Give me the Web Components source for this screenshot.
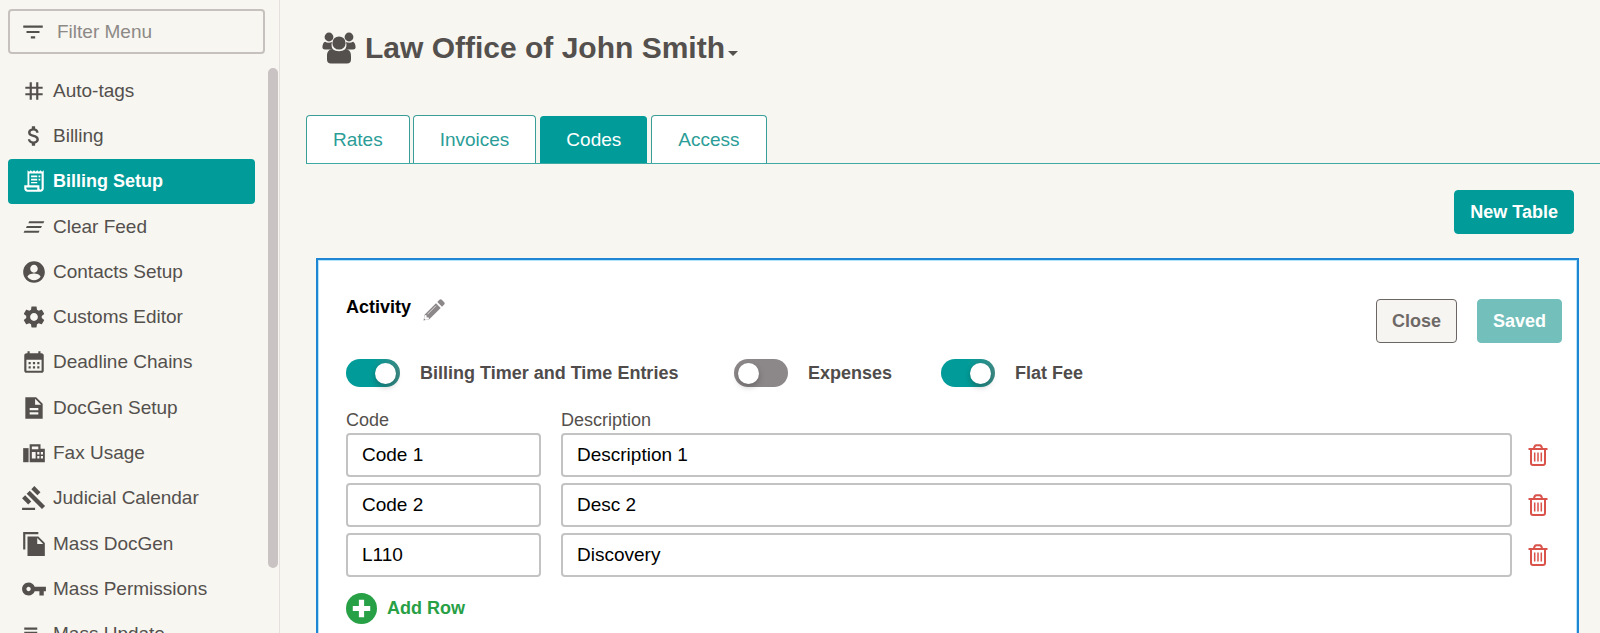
<!DOCTYPE html>
<html lang="en">
<head>
<meta charset="utf-8">
<title>Billing Setup</title>
<style>
  body { margin: 0; background: #f7f6f1; color: #54504d; font-family: "Liberation Sans", Arial, sans-serif; }
</style>
</head>
<body>
<app-shell>
  <side-menu slot="side"></side-menu>
  <office-header></office-header>
  <tab-bar></tab-bar>
  <codes-toolbar></codes-toolbar>
  <code-table-card name="Activity"></code-table-card>
</app-shell>

<script>
const ICONS = {
  filter: '<path d="M10 18h4v-2h-4v2zM3 6v2h18V6H3zm3 7h12v-2H6v2z"/>',
  tag: '<path d="M20 10V8h-4V4h-2v4h-4V4H8v4H4v2h4v4H4v2h4v4h2v-4h4v4h2v-4h4v-2h-4v-4h4zm-6 4h-4v-4h4v4z"/>',
  dollar: '<path d="M11.8 10.9c-2.27-.59-3-1.2-3-2.15 0-1.09 1.01-1.85 2.7-1.85 1.78 0 2.44.85 2.5 2.1h2.21c-.07-1.72-1.12-3.3-3.21-3.81V3h-3v2.16c-1.94.42-3.5 1.68-3.5 3.61 0 2.31 1.91 3.46 4.7 4.13 2.5.6 3 1.48 3 2.41 0 .69-.49 1.79-2.7 1.79-2.06 0-2.87-.92-2.98-2.1h-2.2c.12 2.19 1.76 3.42 3.68 3.83V21h3v-2.15c1.95-.37 3.5-1.5 3.5-3.55 0-2.84-2.43-3.81-4.7-4.4z"/>',
  receipt: '<path fill-rule="evenodd" d="M19.5 3.5L18 2l-1.5 1.5L15 2l-1.5 1.5L12 2l-1.5 1.500L9 2 7.500 3.500 6 2v14H3v3c0 1.660 1.340 3 3 3h12c1.660 0 3-1.340 3-3V2zM19 19c0 .6-.4 1-1 1s-1-.4-1-1v-3H7.700V5H19zM5 18h10v2H6q-1 0-1-1z"/><path d="M9.300 7H15v1.500H9.300zM16.200 7h1.600v1.500h-1.600zM9.300 10H15v1.500H9.300zM16.200 10h1.600v1.500h-1.600zM9.300 13H15v1H9.300z"/>',
  clear: '<path d="M7.600 6.600h13.900l-.8 2H6.800zM5.400 11h13.900l-.8 2H4.600zM3.200 15.400h13.900l-.8 2H2.400z"/>',
  person: '<path d="M12 2C6.48 2 2 6.48 2 12s4.48 10 10 10 10-4.48 10-10S17.52 2 12 2zm0 3.400c1.900 0 3.500 1.600 3.500 3.600s-1.600 3.600-3.500 3.600S8.500 11 8.500 9s1.600-3.600 3.500-3.600zm0 14.200c-2.500 0-4.700-1.280-6-3.220.03-1.990 4-3.080 6-3.080s5.970 1.090 6 3.080c-1.290 1.940-3.500 3.220-6 3.220z"/>',
  gear: '<path d="M19.14 12.94c.04-.3.06-.61.06-.94 0-.32-.02-.64-.07-.94l2.03-1.58c.18-.14.23-.41.12-.61l-1.92-3.32c-.12-.22-.37-.29-.59-.22l-2.39.96c-.5-.38-1.03-.7-1.62-.94l-.36-2.54c-.04-.24-.24-.41-.48-.41h-3.84c-.24 0-.43.17-.47.41l-.36 2.54c-.59.24-1.13.57-1.62.94l-2.39-.96c-.22-.08-.47 0-.59.22L2.740 8.870c-.12.21-.08.47.12.61l2.03 1.58c-.05.3-.09.63-.09.94s.02.64.07.94l-2.03 1.58c-.18.14-.23.41-.12.61l1.92 3.32c.12.22.37.29.59.22l2.39-.96c.5.38 1.03.7 1.62.94l.36 2.54c.05.24.24.41.48.41h3.84c.24 0 .44-.17.47-.41l.36-2.54c.59-.24 1.13-.56 1.62-.94l2.39.96c.22.08.47 0 .59-.22l1.92-3.32c.12-.22.07-.47-.12-.61l-2.01-1.58zM12 15.600c-1.980 0-3.600-1.620-3.600-3.600s1.620-3.600 3.600-3.600 3.600 1.620 3.600 3.600-1.620 3.600-3.600 3.600z"/>',
  calendar: '<path d="M19 4h-1V2h-2v2H8V2H6v2H5c-1.110 0-1.990.9-1.990 2L3 20c0 1.100.89 2 2 2h14c1.100 0 2-.9 2-2V6c0-1.100-.9-2-2-2zm0 16H5V10h14v10zM9 14H7v-2h2v2zm4 0h-2v-2h2v2zm4 0h-2v-2h2v2zm-8 4H7v-2h2v2zm4 0h-2v-2h2v2zm4 0h-2v-2h2v2z"/>',
  doc: '<path d="M14 2H4v20h16V8l-6-6zm2 16H8v-2h8v2zm0-4H8v-2h8v2zm-3-5V3.500L18.500 9H13z"/>',
  fax: '<path d="M2 7.500h5V20.500H2z"/><path fill-rule="evenodd" d="M8 4h10v4h4v12.500H8zM10 6h6v2.500h-6zM10 11h3.500v6H10zM15 11h2v2.300h-2zM18.300 11h2v2.300h-2zM15 14.700h2V17h-2zM18.300 14.700h2V17h-2z"/>',
  gavel: '<path d="M1 21h12v2H1zM5.245 8.070l2.830-2.827 14.140 14.142-2.828 2.828zM12.317 1l5.657 5.656-2.830 2.830-5.654-5.660zM3.825 9.485l5.657 5.657-2.828 2.828-5.657-5.657z"/>',
  copy: '<path d="M16 1H2v16h2V3h12V1zm0 4H6v18h16V11l-6-6zm-1 7V6.500L20.500 12H15z"/>',
  key: '<path d="M12.650 10C11.830 7.670 9.610 6 7 6c-3.310 0-6 2.690-6 6s2.690 6 6 6c2.610 0 4.830-1.670 5.650-4H17v4h4v-4h2v-4H12.650zM7 14c-1.100 0-2-.9-2-2s.9-2 2-2 2 .9 2 2-.9 2-2 2z"/>',
  list: '<path d="M3 6h12v2H3zM3 10h12v2H3zM3 14h8v2H3zM14 18l6-6 2 2-6 6h-2z"/>',
  people: '<circle cx="7" cy="5" r="4.400"/><circle cx="27" cy="5" r="4.400"/><path d="M3 9.700c2 1.300 5 1.300 7 .3-1 3-.3 5.700 1 7.600H3Q.4 17.500.4 15.500.5 11 3 9.700zM31 9.700c-2 1.300-5 1.300-7 .3 1 3 .3 5.700-1 7.600h8q2.600-.1 2.600-2.100Q33.500 11 31 9.700z"/><circle cx="17" cy="11" r="6.600"/><path d="M10.500 17c4 3 9 3 13 0 4 .5 5.500 3 5.500 7v3.500q0 4-4 4H9q-4 0-4-4V24c0-4 1.500-6.500 5.500-7z"/>',
  pencil: '<path d="M16.500.8q1.200-1 2.300 0l2.400 2.400q1 1.200 0 2.300l-2.200 2.200-4.700-4.700zM13 4.300L17.700 9 6.300 20.300.5 21.500 1.700 15.600z"/><path d="M3.200 16.500v2.300h2.300v1.200l-3 .5-1-1 .5-3zM4.500 15.200L13 6.700" fill="#fff" stroke="#fff" stroke-width=".7"/>',
  trash: '<g fill="none" stroke="currentColor" stroke-width="2"><path d="M.5 5h19M3 5V19q0 2 2 2h10q2 0 2-2V5M6 4.500q.3-3 2.300-3.200h3.400q2 .2 2.300 3.200"/><path d="M6.700 8.500v9M10 8.500v9M13.300 8.500v9" stroke-width="1.500"/></g>',
  plus: '<circle cx="16" cy="16" r="16"/><path d="M13.300 7h5.400v6.300H25v5.400h-6.300V25h-5.400v-6.300H7v-5.400h6.300z" fill="#fff"/>',
  caret: '<path d="M0 0h10L5 5z"/>'
};
const svg = (name, w, h, box) =>
  `<svg width="${w}" height="${h}" viewBox="${box || `0 0 ${w} ${h}`}" fill="currentColor" aria-hidden="true">${ICONS[name]}</svg>`;

const BASE = `
  :host, *, *::before { box-sizing: border-box; }
  button, input { font-family: inherit; margin: 0; }
  svg { display: block; flex: none; }
`;
const define = (tag, render, setup) => customElements.define(tag, class extends HTMLElement {
  constructor() { super(); this.attachShadow({ mode: 'open' }); }
  connectedCallback() {
    this.shadowRoot.innerHTML = render(this);
    if (setup) setup(this.shadowRoot, this);
  }
});

define('app-shell', () => `<style>${BASE}
  :host { display: flex; height: 100vh; overflow: hidden; }
  aside { flex: none; width: 280px; border-right: 1px solid #e3e0dd; }
  main { flex: 1; min-width: 0; overflow: auto; scrollbar-width: none; padding: 28px 0 24px 26px; }
</style><aside><slot name="side"></slot></aside><main><slot></slot></main>`);

define('menu-item', el => `<style>${BASE}
  :host { display: block; }
  a { display: flex; align-items: center; gap: 6px; height: 100%; padding: 0 13px; border-radius: 4px;
      color: #54504d; font-size: 19px; line-height: 24px; text-decoration: none; white-space: nowrap; }
  a[aria-current] { background: #019c99; color: #fff; font-size: 18px; font-weight: bold; }
</style><a href="#${el.getAttribute('icon')}"${el.hasAttribute('current') ? ' aria-current="page"' : ''}>${svg(el.getAttribute('icon'), 26, 26, '0 0 24 24')}<slot></slot></a>`);

const MENU = [['tag', 'Auto-tags'], ['dollar', 'Billing'], ['receipt', 'Billing Setup', true], ['clear', 'Clear Feed'],
  ['person', 'Contacts Setup'], ['gear', 'Customs Editor'], ['calendar', 'Deadline Chains'], ['doc', 'DocGen Setup'],
  ['fax', 'Fax Usage'], ['gavel', 'Judicial Calendar'], ['copy', 'Mass DocGen'], ['key', 'Mass Permissions'], ['list', 'Mass Update']];

define('side-menu', () => `<style>${BASE}
  :host { display: flex; flex-direction: column; height: 100%; padding: 9px 1px 0 8px; }
  .filter { display: flex; align-items: center; flex: none; height: 45px; margin: 0 13px 14px 0; padding: 0 11px 0 10px;
      border: 2px solid #c6c1be; border-radius: 4px; gap: 11px; color: #54504d; }
  input { flex: 1; min-width: 0; border: 0; padding: 0; background: none; outline: 0; font-size: 19px; color: #54504d; }
  input::placeholder { color: #8d8986; opacity: 1; }
  .body { display: flex; flex: 1; min-height: 0; gap: 13px; }
  nav { flex: 1; min-width: 0; overflow: hidden; }
  ul { display: grid; grid-auto-rows: 1fr; min-height: 589px; margin: 0; padding: 0; list-style: none; }
  li { display: grid; }
  .rail { display: flex; flex: none; width: 10px; padding-bottom: 65px; }
  .thumb { flex: 1; border-radius: 5px; background: #c9c3c3; }
</style>
<label class="filter">${svg('filter', 26, 26, '0 0 24 24')}<input type="text" placeholder="Filter Menu" aria-label="Filter Menu"></label>
<div class="body">
  <nav aria-label="Settings"><ul>${MENU.map(([i, t, c]) => `<li><menu-item icon="${i}"${c ? ' current' : ''}>${t}</menu-item></li>`).join('')}</ul></nav>
  <div class="rail"><div class="thumb"></div></div>
</div>`);

define('office-header', () => `<style>${BASE}
  :host { display: block; padding-left: 16px; }
  h1 { margin: 0; font-size: 30px; line-height: 40px; }
  button { display: flex; align-items: center; gap: 9px; padding: 0; border: 0; background: none; color: #54504d; font: inherit; }
  .name { display: flex; align-items: center; gap: 3px; }
  .name svg { margin-top: 10px; }
</style><h1><button type="button" aria-haspopup="menu">${svg('people', 34, 32)}<span class="name">Law Office of John Smith${svg('caret', 10, 5)}</span></button></h1>`);

define('tab-bar', () => `<style>${BASE}
  :host { display: flex; gap: 3px; margin-top: 47px; border-bottom: 1px solid #3fa9a4; }
  a { height: 48px; padding: 0 26px; border: 1px solid #3b9d97; border-bottom: 0; border-radius: 4px 4px 0 0; background: #fff;
      color: #2b9d97; font-size: 19px; line-height: 48px; text-decoration: none; }
  a[aria-current] { background: #019c99; border-color: #f7f6f1; background-clip: padding-box; color: #fff; }
</style><a href="#rates">Rates</a><a href="#invoices">Invoices</a><a href="#codes" aria-current="page">Codes</a><a href="#access">Access</a>`);

define('ui-button', el => `<style>${BASE}
  :host { display: block; }
  button { display: block; height: 44px; padding: 0 15px; border: 1px solid #019c99; border-radius: 4px; background: #019c99; color: #fff;
      font-size: 18px; font-weight: bold; white-space: nowrap; }
  button.plain { background: #f7f5f1; border-color: #6b6564; color: #6e6967; }
  button.done { background: #73bfbc; border-color: #73bfbc; }
</style><button type="button" class="${el.getAttribute('kind') || ''}"><slot></slot></button>`);

define('codes-toolbar', () => `<style>
  :host { display: flex; justify-content: flex-end; padding: 26px 26px 24px 0; }
</style><ui-button>New Table</ui-button>`);

define('toggle-switch', el => `<style>${BASE}
  :host { display: block; }
  label { display: flex; align-items: center; gap: 20px; color: #4f4c4b; font-size: 18px; font-weight: bold; white-space: nowrap; }
  input { appearance: none; flex: none; display: flex; align-items: center; width: 54px; height: 28px; padding: 0 4px; border-radius: 14px; background: #8c8788; }
  input::before { content: ""; width: 21px; height: 21px; border-radius: 50%; background: #fff; box-shadow: 0 3px 6px #00000040; }
  input:checked { justify-content: flex-end; background: linear-gradient(90deg, #019c99 50%, #3d8a84); }
</style><label><input type="checkbox" role="switch"${el.hasAttribute('on') ? ' checked' : ''}><span><slot></slot></span></label>`);

const ROWS = [['Code 1', 'Description 1'], ['Code 2', 'Desc 2'], ['L110', 'Discovery']];
const row = ([code, desc]) => `<tr>
  <td><input type="text" aria-labelledby="code" value="${code}"></td>
  <td><input type="text" aria-labelledby="desc" value="${desc}"></td>
  <td><button class="delete" type="button" aria-label="Delete row">${svg('trash', 20, 22)}</button></td></tr>`;

define('code-table-card', el => `<style>${BASE}
  :host { display: block; min-height: 480px; margin: 0 21px 0 10px; padding: 39px 15px 30px 28px; border: 2px solid #1e86d2;
      box-shadow: inset 0 0 0 1px #b5e3fb; background: #fff; }
  header { display: flex; justify-content: space-between; }
  .title { display: flex; align-items: flex-start; gap: 12px; }
  h2 { margin: 0; color: #000; font-size: 18px; line-height: 17px; }
  .edit, .delete { display: block; padding: 0; border: 0; background: none; }
  .edit { color: #8c8788; }
  .actions { display: flex; gap: 20px; }
  .toggles { display: grid; grid-template-columns: 388px 207px auto; justify-content: start; margin-top: 16px; }
  table { width: 100%; margin-top: 23px; border-collapse: collapse; table-layout: fixed; }
  col.code { width: 215px; } col.act { width: 50px; }
  th { padding: 0 0 2px; color: #54504d; font-size: 18px; font-weight: normal; line-height: 21px; text-align: left; }
  td { padding: 0 0 6px; }
  thead td { padding: 0; }
  td:first-child { padding-right: 20px; }
  td input { display: block; width: 100%; height: 44px; padding: 0 14px; border: 2px solid #c4c3c3; border-radius: 4px; background: #fff; color: #000; font-size: 19px; }
  .delete { margin-left: 16px; color: #d9534a; }
  .add { display: flex; align-items: center; gap: 10px; margin-top: 10px; padding: 0; border: 0; background: none; color: #28a046; font-size: 18px; font-weight: bold; }
</style>
<header>
  <div class="title"><h2>${el.getAttribute('name')}</h2><button class="edit" type="button" aria-label="Rename table">${svg('pencil', 22, 22)}</button></div>
  <div class="actions"><ui-button kind="plain">Close</ui-button><ui-button kind="done">Saved</ui-button></div>
</header>
<div class="toggles"><toggle-switch on>Billing Timer and Time Entries</toggle-switch><toggle-switch>Expenses</toggle-switch><toggle-switch on>Flat Fee</toggle-switch></div>
<table><colgroup><col class="code"><col><col class="act"></colgroup>
  <thead><tr><th id="code">Code</th><th id="desc">Description</th><td></td></tr></thead>
  <tbody>${ROWS.map(row).join('')}</tbody></table>
<button class="add" type="button">${svg('plus', 31, 31, '0 0 32 32')}Add Row</button>`,
root => {
  const body = root.querySelector('tbody');
  root.querySelector('.add').addEventListener('click', () => body.insertAdjacentHTML('beforeend', row(['', ''])));
  body.addEventListener('click', e => { if (e.target.closest('.delete')) e.target.closest('tr').remove(); });
});
</script>
</body>
</html>
